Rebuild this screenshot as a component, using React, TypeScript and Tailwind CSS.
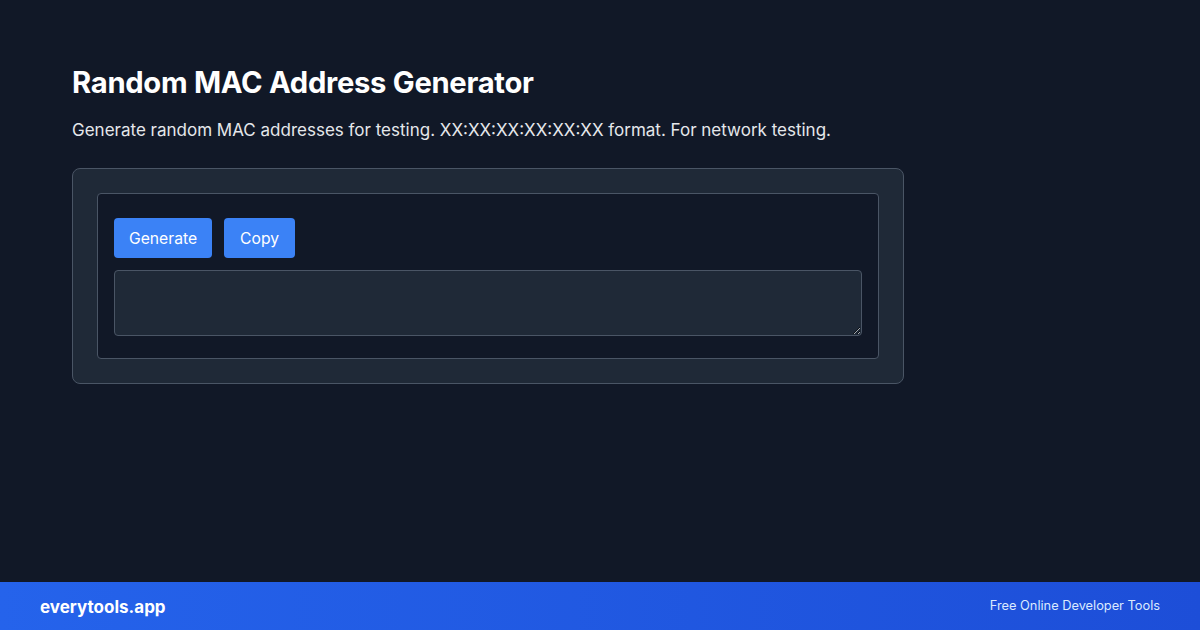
import React from "react";

const App = () => {
  return (
    <div
      className="flex h-[630px] w-[1200px] flex-col bg-[#111827] text-white"
      style={{ fontFamily: "Inter, 'Noto Sans', sans-serif" }}
    >
      <main className="flex-1 px-[72px] pt-[64px]">
        <h1 className="text-[29.2px] font-bold leading-[38px] tracking-[-0.01em] text-white">
          Random MAC Address Generator
        </h1>
        <p className="mt-[15px] text-[17px] leading-[26px] text-gray-200">
          Generate random MAC addresses for testing. XX:XX:XX:XX:XX:XX format.
          For network testing.
        </p>

        <div className="mt-[25px] w-[832px] rounded-lg border border-gray-600 bg-[#1f2937] p-6">
          <div className="rounded border border-gray-600 bg-[#111827] px-4 pb-[22px] pt-6">
            <div className="flex gap-3">
              <button
                type="button"
                className="h-10 rounded bg-[#3b82f6] px-[15px] pt-px text-[15.7px] text-white"
              >
                Generate
              </button>
              <button
                type="button"
                className="h-10 rounded bg-[#3b82f6] px-4 pt-px text-[15.7px] text-white"
              >
                Copy
              </button>
            </div>
            <textarea
              className="mt-3 block h-[66px] w-full rounded border border-gray-600 bg-[#1f2937] p-2 text-sm text-gray-100 outline-none"
              readOnly
            />
          </div>
        </div>
      </main>

      <footer className="flex h-12 items-center justify-between bg-gradient-to-r from-[#2563eb] to-[#1d4ed8] px-10">
        <span className="mt-[4px] text-[17px] font-bold text-white">
          everytools.app
        </span>
        <span className="text-[12.8px] text-blue-100">
          Free Online Developer Tools
        </span>
      </footer>
    </div>
  );
};

export default App;
